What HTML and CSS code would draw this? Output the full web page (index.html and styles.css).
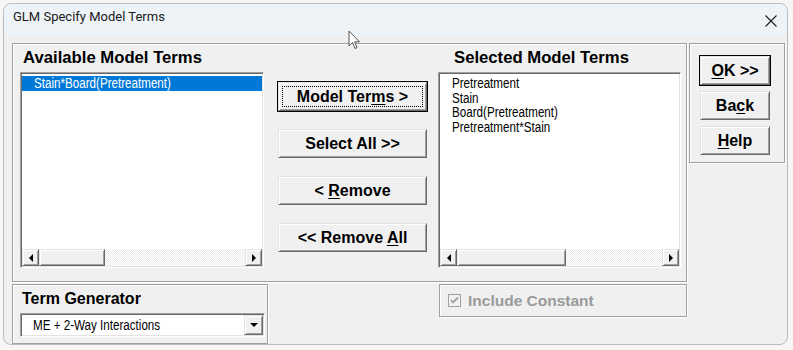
FILE: index.html
```html
<!DOCTYPE html>
<html lang="en">
<head>
  <meta charset="UTF-8">
  <title>GLM Specify Model Terms</title>
  <link rel="stylesheet" href="styles.css">
</head>
<body>
  <div class="window">
    <div class="titlebar">
      <span class="title">GLM Specify Model Terms</span>
      <svg class="close" width="12" height="12" viewBox="0 0 12 12">
        <path d="M0.5 0.5 L11.5 11.5 M11.5 0.5 L0.5 11.5" stroke="#1b1b1b" stroke-width="1.1" fill="none"/>
      </svg>
    </div>

    <div class="content">
      <div class="row-top">
        <div class="frame main">
          <div class="col">
            <div class="label big">Available Model Terms</div>
            <div class="listbox">
              <div class="items">
                <div class="item selected"><span>Stain*Board(Pretreatment)</span></div>
              </div>
              <div class="hscroll">
                <div class="raised arrow"><span class="tri-left"></span></div>
                <div class="raised thumb" style="width: 66px;"></div>
                <div class="track"></div>
                <div class="raised arrow"><span class="tri-right"></span></div>
              </div>
            </div>
          </div>

          <div class="mid">
            <button class="raised btn default focus">Model Ter<u>m</u>s &gt;</button>
            <button class="raised btn">Select All &gt;&gt;</button>
            <button class="raised btn">&lt; <u>R</u>emove</button>
            <button class="raised btn">&lt;&lt; Remove <u>A</u>ll</button>
          </div>

          <div class="col right-col">
            <div class="label big indent">Selected Model Terms</div>
            <div class="listbox">
              <div class="items">
                <div class="item"><span>Pretreatment</span></div>
                <div class="item"><span>Stain</span></div>
                <div class="item"><span>Board(Pretreatment)</span></div>
                <div class="item"><span>Pretreatment*Stain</span></div>
              </div>
              <div class="hscroll">
                <div class="raised arrow"><span class="tri-left"></span></div>
                <div class="raised thumb" style="width: 109px;"></div>
                <div class="track"></div>
                <div class="raised arrow"><span class="tri-right"></span></div>
              </div>
            </div>
          </div>
        </div>

        <div class="frame side">
          <button class="raised btn small default"><u>O</u>K &gt;&gt;</button>
          <button class="raised btn small">Ba<u>c</u>k</button>
          <button class="raised btn small"><u>H</u>elp</button>
        </div>
      </div>

      <div class="row-bottom">
        <div class="frame gen">
          <div class="label">Term Generator</div>
          <div class="combo">
            <div class="combo-text"><span>ME + 2-Way Interactions</span></div>
            <div class="raised drop"><span class="tri-down"></span></div>
          </div>
        </div>

        <div class="frame const">
          <svg class="check" width="13" height="13" viewBox="0 0 13 13">
            <rect x="0.5" y="0.5" width="12" height="12" fill="#f0f0f0" stroke="#a0a0a0"/>
            <path d="M3 6 L5 8.5 L10 3.5" stroke="#a0a0a0" stroke-width="1.8" fill="none"/>
          </svg>
          <span class="const-text">Include Constant</span>
        </div>
      </div>
    </div>
  </div>

  <!-- mouse pointer over the title bar -->
  <svg class="cursor" width="13" height="20" viewBox="0 0 13 20">
    <path d="M1 1 L1 16 L4.5 12.5 L7 18.5 L9 17.6 L6.6 11.8 L11.5 11.8 Z" fill="#fff" stroke="#555" stroke-width="1"/>
  </svg>
</body>
</html>
```

FILE: styles.css
```css
* {
  box-sizing: border-box;
}
body {
  margin: 0;
  background: #f6f6f6;
  font-family: "Liberation Sans", Arial, sans-serif;
}
.window {
  margin: 3px 0 0 3px;
  width: 785px;
  height: 342px;
  border: 1px solid #bcbcbc;
  border-radius: 8px;
  overflow: hidden;
  background: #f0f0f0;
}
.titlebar {
  height: 31px;
  background: #eef3f8;
  display: flex;
  align-items: flex-start;
  justify-content: space-between;
  padding: 5px 10px 0 9px;
}
.title {
  font-family: Roboto, "Noto Sans", sans-serif;
  font-size: 13px;
  color: #1a1a1a;
}
.close {
  margin-top: 6px;
}
.content {
  padding: 8px 0 0 8px;
}

/* group boxes */
.frame {
  border: 1px solid #a0a0a0;
  box-shadow: inset 1px 1px 0 #fff, 1px 1px 0 #fff;
}
.row-top {
  display: flex;
  gap: 2px;
  align-items: flex-start;
}
.row-bottom {
  display: flex;
  margin-top: 2px;
  align-items: flex-start;
}
.main {
  width: 675px;
  height: 239px;
  display: flex;
  padding-left: 7px;
}
.col {
  width: 244px;
}
.right-col {
  width: 243px;
  margin-left: 11px;
}
.label {
  font-weight: bold;
  font-size: 16px;
  line-height: 28px;
  height: 28px;
  padding-left: 3px;
  color: #000;
  white-space: nowrap;
}
.label.big {
  font-size: 16.7px;
}
.label.indent {
  padding-left: 16px;
}

/* list boxes */
.listbox {
  height: 196px;
  background: #fff;
  border: 1px solid;
  border-color: #a0a0a0 #fff #fff #a0a0a0;
  box-shadow: inset 1px 1px 0 #696969, inset -1px -1px 0 #e3e3e3;
  padding: 1px;
  display: flex;
  flex-direction: column;
}
.items {
  flex: 1;
  padding-top: 2px;
}
.item {
  font-size: 14px;
  line-height: 14.5px;
  padding-left: 12px;
  color: #000;
  white-space: nowrap;
}
/* the list font is a narrow sans */
.item span,
.combo-text span {
  display: inline-block;
  transform: scaleX(0.83);
  transform-origin: 0 50%;
}
.item.selected {
  background: #0078d7;
  color: #fff;
}

/* classic 3d controls */
.raised {
  background: #f0f0f0;
  border: 1px solid;
  border-color: #e3e3e3 #696969 #696969 #e3e3e3;
  box-shadow: inset 1px 1px 0 #fff, inset -1px -1px 0 #a0a0a0;
}
.hscroll {
  height: 17px;
  display: flex;
}
.arrow {
  width: 17px;
  height: 17px;
  display: flex;
  align-items: center;
  justify-content: center;
}
.thumb {
  height: 17px;
}
.track {
  flex: 1;
  background-color: #fff;
  background-image: repeating-conic-gradient(#ececec 0 25%, #fff 0 50%);
  background-size: 2px 2px;
}
.tri-left {
  border-right: 4px solid #000;
  border-top: 4px solid transparent;
  border-bottom: 4px solid transparent;
}
.tri-right {
  border-left: 4px solid #000;
  border-top: 4px solid transparent;
  border-bottom: 4px solid transparent;
}
.tri-down {
  border-top: 4px solid #000;
  border-left: 4px solid transparent;
  border-right: 4px solid transparent;
}

/* buttons */
.mid {
  width: 149px;
  margin-left: 14px;
  padding-top: 38px;
  display: flex;
  flex-direction: column;
  gap: 18px;
}
.btn {
  position: relative;
  height: 29px;
  width: 149px;
  padding: 0;
  font-family: "Liberation Sans", Arial, sans-serif;
  font-weight: bold;
  font-size: 16px;
  color: #000;
}
.btn u {
  text-underline-offset: 2px;
}
.btn.default {
  outline: 1px solid #000;
}
.btn.focus::after {
  content: "";
  position: absolute;
  left: 3px;
  top: 3px;
  right: 3px;
  bottom: 3px;
  border: 1px dotted #000;
}
.side {
  width: 96px;
  height: 120px;
  padding: 12px 0 0 10px;
  display: flex;
  flex-direction: column;
  gap: 6px;
}
.btn.small {
  width: 70px;
}

/* term generator */
.gen {
  width: 256px;
  height: 60px;
  padding-left: 7px;
}
.gen .label {
  padding-left: 2px;
}
.combo {
  width: 245px;
  height: 24px;
  background: #fff;
  border: 1px solid;
  border-color: #a0a0a0 #fff #fff #a0a0a0;
  box-shadow: inset 1px 1px 0 #696969, inset -1px -1px 0 #e3e3e3;
  padding: 1px;
  display: flex;
  align-items: center;
}
.combo-text {
  flex: 1;
  padding-left: 11px;
  font-size: 14px;
  color: #000;
  white-space: nowrap;
}
.drop {
  width: 19px;
  height: 20px;
  display: flex;
  align-items: center;
  justify-content: center;
}

/* include constant */
.const {
  width: 248px;
  height: 33px;
  margin-left: 171px;
  padding-left: 8px;
  display: flex;
  align-items: center;
  gap: 7px;
}
.check {
  display: block;
}
.const-text {
  font-weight: bold;
  font-size: 15.5px;
  color: #9a9a9a;
}

.cursor {
  position: absolute;
  left: 348px;
  top: 30px;
}
```
